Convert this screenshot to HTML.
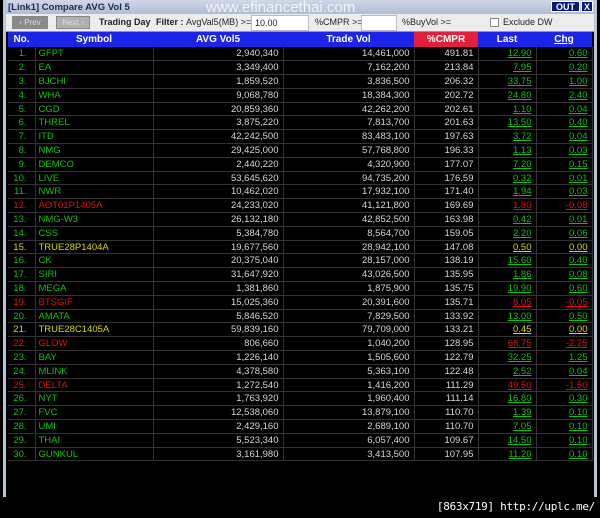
<!DOCTYPE html><html><head><meta charset="utf-8"><style>
*{margin:0;padding:0;box-sizing:border-box}
body{width:600px;height:518px;background:#000;position:relative;overflow:hidden;font-family:"Liberation Sans",sans-serif;font-size:10px}
.frame{position:absolute;left:3px;top:0;width:594px;height:497px;background:#000;border-left:3px solid #b8c4d8;border-right:3px solid #b8c4d8}
.title{position:absolute;left:0;top:0;width:588px;height:14px;background:linear-gradient(#cfd8e8,#b0bcd4);font-weight:bold;font-size:9.5px;color:#1a2a50;padding:2px 0 0 2px}
.wm{position:absolute;left:200px;top:-1px;font-size:15px;color:#fff;opacity:.8;font-weight:normal}
.out{position:absolute;right:14px;top:1px;background:#0a1a7a;color:#fff;font-size:9px;padding:0 4px;height:11px;border:1px solid #fff}
.x{position:absolute;right:1px;top:1px;background:#0a1a7a;color:#fff;font-size:9px;width:12px;height:11px;text-align:center;border:1px solid #fff}
.tb{position:absolute;left:0;top:14px;width:588px;height:18px;background:#ececec;border-bottom:1px solid #999;font-size:9px;color:#222}
.tb span{position:absolute;top:3px}
.btn{position:absolute;top:2px;height:13px;border:1px solid #888;background:#8a8a8a;color:#ddd;font-size:8px;text-align:center;padding-top:1px}
.inp{position:absolute;top:1px;height:16px;background:#fff;border:1px solid #bbb}
table{position:absolute;left:2px;top:32px;border-collapse:collapse;table-layout:fixed}
th{background:#1c24e8;color:#fff;font-size:10px;height:15px;font-weight:bold}
th.r{background:#e0203c}
td{height:13.8px;border-bottom:1px solid #333;border-right:1px solid #333;color:#d8d8d8;font-size:9.5px;padding:0 3px;white-space:nowrap}
td.c{text-align:right;padding-right:8px}
td.n{text-align:right;padding-right:4px}
.g{color:#10c010}.rd{color:#e01010}.y{color:#d8d800}
td u{text-decoration:underline}
.foot{position:absolute;right:5px;top:500px;color:#fff;font-family:"DejaVu Sans Mono",monospace;font-size:11px;letter-spacing:-0.3px}
</style></head><body>
<div class="frame">
<div class="title">[Link1] Compare AVG Vol 5<span class="wm">www.efinancethai.com</span><span class="out">OUT</span><span class="x">X</span></div>
<div class="tb">
<div class="btn" style="left:6px;width:36px">&lsaquo; Prev</div>
<div class="btn" style="left:50px;width:34px;background:#b0b0b0">Next &rsaquo;</div>
<span style="left:93px;font-weight:bold">Trading Day</span>
<span style="left:150px;font-weight:bold">Filter :</span>
<span style="left:180px">AvgVal5(MB) &gt;=</span>
<div class="inp" style="left:245px;width:58px"><span style="left:3px;top:2px;position:absolute">10.00</span></div>
<span style="left:309px">%CMPR &gt;=</span>
<div class="inp" style="left:355px;width:36px"></div>
<span style="left:396px">%BuyVol &gt;=</span>
<div style="position:absolute;left:484px;top:4px;width:9px;height:9px;border:1px solid #888;background:#fff"></div>
<span style="left:497px">Exclude DW</span>
</div>
<table>
<colgroup><col style="width:27px"><col style="width:118px"><col style="width:130px"><col style="width:131px"><col style="width:64px"><col style="width:58px"><col style="width:56px"></colgroup>
<tr><th>No.</th><th>Symbol</th><th>AVG Vol5</th><th>Trade Vol</th><th class="r">%CMPR</th><th>Last</th><th><u>Chg</u></th></tr>
<tbody id="b">
</tbody></table>
</div>
<div class="foot">[863x719] http://uplc.me/</div>
<script>
var d=[["GFPT","2,940,340","14,461,000","491.81","12.90","0.60","g"],["EA","3,349,400","7,162,200","213.84","7.95","0.20","g"],["BJCHI","1,859,520","3,836,500","206.32","33.75","1.00","g"],["WHA","9,068,780","18,384,300","202.72","24.80","2.40","g"],["CGD","20,859,360","42,262,200","202.61","1.10","0.04","g"],["THREL","3,875,220","7,813,700","201.63","13.50","0.40","g"],["ITD","42,242,500","83,483,100","197.63","3.72","0.04","g"],["NMG","29,425,000","57,768,800","196.33","1.13","0.03","g"],["DEMCO","2,440,220","4,320,900","177.07","7.20","0.15","g"],["LIVE","53,645,620","94,735,200","176.59","0.32","0.01","g"],["NWR","10,462,020","17,932,100","171.40","1.94","0.03","g"],["AOT01P1405A","24,233,020","41,121,800","169.69","1.80","-0.08","rd"],["NMG-W3","26,132,180","42,852,500","163.98","0.42","0.01","g"],["CSS","5,384,780","8,564,700","159.05","2.20","0.06","g"],["TRUE28P1404A","19,677,560","28,942,100","147.08","0.50","0.00","y"],["CK","20,375,040","28,157,000","138.19","15.60","0.40","g"],["SIRI","31,647,920","43,026,500","135.95","1.86","0.08","g"],["MEGA","1,381,860","1,875,900","135.75","19.90","0.60","g"],["BTSGIF","15,025,360","20,391,600","135.71","8.05","-0.05","rd"],["AMATA","5,846,520","7,829,500","133.92","13.00","0.50","g"],["TRUE28C1405A","59,839,160","79,709,000","133.21","0.45","0.00","y"],["GLOW","806,660","1,040,200","128.95","66.75","-2.25","rd"],["BAY","1,226,140","1,505,600","122.79","32.25","1.25","g"],["MLINK","4,378,580","5,363,100","122.48","2.52","0.04","g"],["DELTA","1,272,540","1,416,200","111.29","49.50","-1.50","rd"],["NYT","1,763,920","1,960,400","111.14","16.80","0.30","g"],["FVC","12,538,060","13,879,100","110.70","1.39","0.10","g"],["UMI","2,429,160","2,689,100","110.70","7.05","0.10","g"],["THAI","5,523,340","6,057,400","109.67","14.50","0.10","g"],["GUNKUL","3,161,980","3,413,500","107.95","11.20","0.10","g"]];
var h="";d.forEach(function(r,i){var c=r[6];h+='<tr><td class="c '+c+'">'+(i+1)+'.</td><td class="'+c+'">'+r[0]+'</td><td class="n">'+r[1]+'</td><td class="n">'+r[2]+'</td><td class="n">'+r[3]+'</td><td class="n '+c+'"><u>'+r[4]+'</u></td><td class="n '+c+'"><u>'+r[5]+'</u></td></tr>'});
document.getElementById("b").innerHTML=h;
</script>
</body></html>
